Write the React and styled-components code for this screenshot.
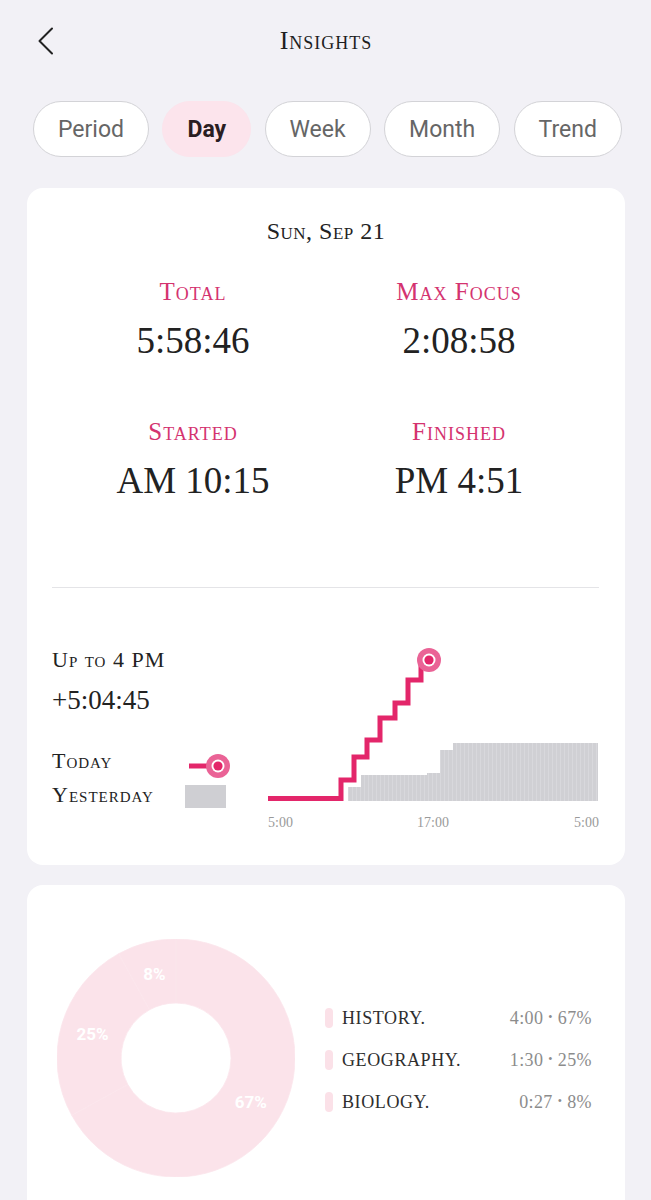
import React from 'react'
import styled, { createGlobalStyle } from 'styled-components'

const GlobalStyle = createGlobalStyle`
  body {
    margin: 0;
    background: #f2f1f6;
    font-family: "Liberation Serif", "Times New Roman", serif;
  }
`

const PINK = '#e3266a'
const tabs = ['Period', 'Day', 'Week', 'Month', 'Trend']
const stats = [
  { label: 'Total', value: '5:58:46' },
  { label: 'Max Focus', value: '2:08:58' },
  { label: 'Started', value: 'AM 10:15' },
  { label: 'Finished', value: 'PM 4:51' },
]
const subjects = [
  { name: 'HISTORY.', time: '4:00', pct: 67 },
  { name: 'GEOGRAPHY.', time: '1:30', pct: 25 },
  { name: 'BIOLOGY.', time: '0:27', pct: 8 },
]
// yesterday's cumulative bars: [x1, x2, top]
const bars = [
  [80, 93, 144],
  [93, 159, 132],
  [159, 172, 130],
  [172, 185, 107],
  [185, 330, 100],
]

const App = () => {
  return (
    <>
      <GlobalStyle />
      <Page>
        <Header>
          <Back>
            <svg width="18" height="28" viewBox="0 0 18 28">
              <polyline points="15,1.5 2.5,14 15,26.5" fill="none" stroke="#222" strokeWidth="2" strokeLinecap="round" strokeLinejoin="round" />
            </svg>
          </Back>
          <Title>Insights</Title>
          <span />
        </Header>

        <Tabs>
          {tabs.map((t) => (
            <Tab key={t} $active={t === 'Day'}>{t}</Tab>
          ))}
        </Tabs>

        <Card>
          <DateLine>Sun, Sep 21</DateLine>
          <Stats>
            {stats.map((s) => (
              <Stat key={s.label}>
                <StatLabel>{s.label}</StatLabel>
                <StatValue>{s.value}</StatValue>
              </Stat>
            ))}
          </Stats>
          <Divider />
          <ChartRow>
            <Side>
              <UpTo>Up to 4 PM</UpTo>
              <Diff>+5:04:45</Diff>
              <LegendRow $first>
                <LegendLabel>Today</LegendLabel>
                <svg width="46" height="30" viewBox="0 0 46 30" overflow="visible">
                  <line x1="4" y1="20" x2="28" y2="20" stroke={PINK} strokeWidth="5" />
                  <Ring cx={33} cy={20} />
                </svg>
              </LegendRow>
              <LegendRow>
                <LegendLabel>Yesterday</LegendLabel>
                <svg width="46" height="30" viewBox="0 0 46 30">
                  <rect x="0" y="5" width="41" height="23" fill="#cfcfd3" />
                </svg>
              </LegendRow>
            </Side>
            <svg width="332" height="190" viewBox="0 0 332 190" overflow="visible">
              <defs>
                <pattern id="stripes" width="4" height="10" patternUnits="userSpaceOnUse">
                  <rect width="4" height="10" fill="#d0d0d4" />
                  <rect width="1" height="10" fill="#d8d8dc" />
                </pattern>
              </defs>
              {bars.map(([x1, x2, top]) => (
                <rect key={x1} x={x1} y={top} width={x2 - x1} height={158 - top} fill="url(#stripes)" />
              ))}
              <path
                d="M0,155.5 H73 V137 H86 V114 H99 V97 H112 V75 H127 V60 H140 V37 H153 V20"
                fill="none"
                stroke={PINK}
                strokeWidth="5"
              />
              <Ring cx={161} cy={17} />
              <AxisText x="0" y="184" textAnchor="start">5:00</AxisText>
              <AxisText x="165" y="184" textAnchor="middle">17:00</AxisText>
              <AxisText x="331" y="184" textAnchor="end">5:00</AxisText>
            </svg>
          </ChartRow>
        </Card>

        <Card2>
          <Donut />
          <Legend>
            {subjects.map((s) => (
              <SubjectRow key={s.name}>
                <Marker />
                <SubjectName>{s.name}</SubjectName>
                <SubjectValue>{s.time} <Dot>•</Dot> {s.pct}%</SubjectValue>
              </SubjectRow>
            ))}
          </Legend>
        </Card2>
      </Page>
    </>
  )
}

const Ring = ({ cx, cy }) => (
  <g>
    <circle cx={cx} cy={cy} r="12" fill="#ea6396" />
    <circle cx={cx} cy={cy} r="6.5" fill="#fff" />
    <circle cx={cx} cy={cy} r="4.6" fill={PINK} />
  </g>
)

const Donut = () => {
  const c = 119
  const R = 119
  const r = 55
  // angles clockwise from 12 o'clock
  const slices = [
    { from: 0, to: 241.2, label: '67%' },
    { from: -118.8, to: -28.8, label: '25%' },
    { from: -28.8, to: 0, label: '8%' },
  ]
  const pt = (rad, deg) => {
    const a = (deg * Math.PI) / 180
    return [c + rad * Math.sin(a), c - rad * Math.cos(a)]
  }
  return (
    <svg width="238" height="238" viewBox="0 0 238 238" style={{ flex: 'none' }}>
      {slices.map((s) => {
        const large = s.to - s.from > 180 ? 1 : 0
        const [x1, y1] = pt(R, s.from)
        const [x2, y2] = pt(R, s.to)
        const [x3, y3] = pt(r, s.to)
        const [x4, y4] = pt(r, s.from)
        const d = `M${x1},${y1} A${R},${R} 0 ${large} 1 ${x2},${y2} L${x3},${y3} A${r},${r} 0 ${large} 0 ${x4},${y4} Z`
        const [lx, ly] = pt(87, (s.from + s.to) / 2)
        return (
          <g key={s.label}>
            <path d={d} fill="#fbe3ea" stroke="#fbe6ec" strokeWidth="0.8" />
            <DonutText x={lx} y={ly + 6} textAnchor="middle">{s.label}</DonutText>
          </g>
        )
      })}
    </svg>
  )
}

export default App

const Page = styled.div`
  min-height: 1200px;
  padding: 0 26px 0 27px;
  box-sizing: border-box;
`
const Header = styled.div`
  height: 82px;
  display: grid;
  grid-template-columns: 1fr auto 1fr;
  align-items: center;
`
const Back = styled.div`
  padding-left: 10px;
  display: flex;
  align-items: center;
`
const Title = styled.div`
  font-size: 26px;
  font-variant: small-caps;
  letter-spacing: 1px;
  color: #1e1e1e;
`
const Tabs = styled.div`
  display: flex;
  justify-content: space-between;
  padding: 0 3px 0 6px;
  margin-top: 19px;
`
const Tab = styled.div`
  height: 56px;
  box-sizing: border-box;
  padding: 0 24px;
  display: flex;
  align-items: center;
  border-radius: 28px;
  border: 1.5px solid ${(p) => (p.$active ? '#fce4ec' : '#d3d3d7')};
  background: ${(p) => (p.$active ? '#fce4ec' : '#fff')};
  font-family: Roboto, "Liberation Sans", sans-serif;
  font-size: 23px;
  font-weight: ${(p) => (p.$active ? 700 : 400)};
  color: ${(p) => (p.$active ? '#2a1d22' : '#666')};
`
const Card = styled.div`
  margin-top: 31px;
  background: #fff;
  border-radius: 16px;
  padding: 28px 0 32px;
`
const DateLine = styled.div`
  text-align: center;
  font-size: 24px;
  line-height: 30px;
  font-variant: small-caps;
  letter-spacing: 0.5px;
  color: #222;
`
const Stats = styled.div`
  display: grid;
  grid-template-columns: 1fr 1fr;
  row-gap: 54px;
  padding: 0 33px;
  margin-top: 31px;
`
const Stat = styled.div`
  text-align: center;
`
const StatLabel = styled.div`
  font-size: 25px;
  line-height: 30px;
  font-variant: small-caps;
  letter-spacing: 1px;
  color: #d4336f;
`
const StatValue = styled.div`
  margin-top: 12px;
  font-size: 37px;
  line-height: 44px;
  color: #222;
`
const Divider = styled.div`
  height: 1px;
  background: #e4e4e7;
  margin: 84px 26px 0 25px;
`
const ChartRow = styled.div`
  display: flex;
  align-items: flex-start;
  padding: 0 25px;
  margin-top: 55px;
`
const Side = styled.div`
  width: 218px;
  margin-top: 2px;
  color: #222;
`
const UpTo = styled.div`
  font-size: 22px;
  line-height: 30px;
  font-variant: small-caps;
  letter-spacing: 1px;
`
const Diff = styled.div`
  margin-top: 7px;
  font-size: 27px;
  line-height: 36px;
`
const LegendRow = styled.div`
  display: flex;
  align-items: center;
  height: 30px;
  margin-top: ${(p) => (p.$first ? '28px' : '4px')};
`
const LegendLabel = styled.div`
  width: 133px;
  font-size: 22px;
  font-variant: small-caps;
  letter-spacing: 1px;
`
const AxisText = styled.text`
  font-family: "Liberation Serif", serif;
  font-size: 14px;
  fill: #9a9a9a;
`
const Card2 = styled.div`
  margin-top: 20px;
  background: #fff;
  border-radius: 16px;
  padding: 54px 33px 70px 30px;
  display: flex;
  align-items: center;
  gap: 30px;
`
const DonutText = styled.text`
  font-family: Roboto, "Liberation Sans", sans-serif;
  font-weight: 700;
  font-size: 17px;
  fill: #fff;
`
const Legend = styled.div`
  flex: 1;
  display: flex;
  flex-direction: column;
  padding-top: 4px;
`
const SubjectRow = styled.div`
  height: 42px;
  display: flex;
  align-items: center;
`
const Marker = styled.div`
  width: 8px;
  height: 20px;
  border-radius: 4px;
  background: #fbe1e8;
`
const SubjectName = styled.div`
  flex: 1;
  margin-left: 9px;
  font-size: 18px;
  letter-spacing: 0.6px;
  color: #2e2e2e;
`
const SubjectValue = styled.div`
  font-size: 18px;
  letter-spacing: 0.4px;
  color: #8c8c8c;
`
const Dot = styled.span`
  font-size: 12px;
  vertical-align: 3px;
`
